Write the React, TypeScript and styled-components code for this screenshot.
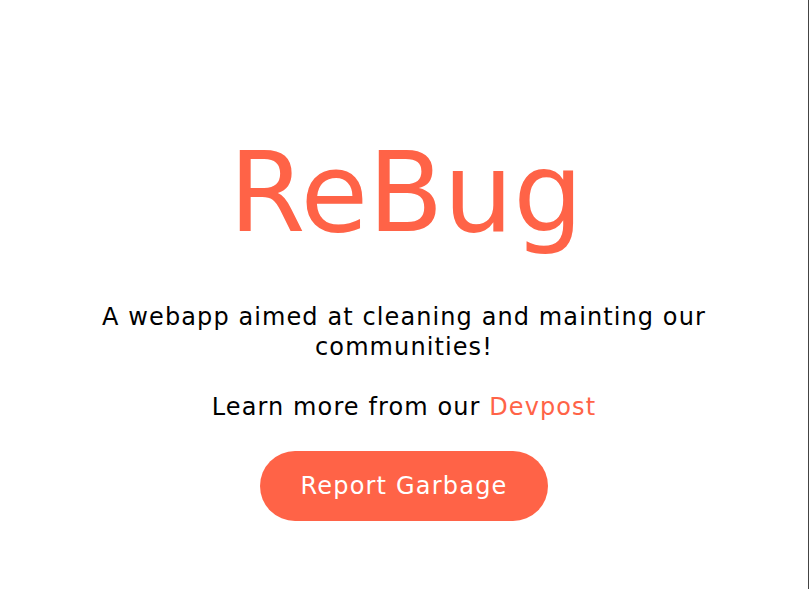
import React from "react";
import styled, { createGlobalStyle } from "styled-components";

const GlobalStyle = createGlobalStyle`
  html, body {
    margin: 0;
    padding: 0;
    background: #ffffff;
  }
  body {
    font-family: "DejaVu Sans", "Liberation Sans", sans-serif;
  }
`;

const Page = styled.main`
  box-sizing: border-box;
  width: 809px;
  height: 589px;
  border-right: 1px solid #444444;
  display: flex;
  flex-direction: column;
  align-items: center;
  padding-top: 138px;
  color: #000000;
`;

const Title = styled.h1`
  margin: 0;
  padding-left: 4px;
  font-size: 110px;
  line-height: 110px;
  font-weight: 400;
  letter-spacing: 0;
  color: #ff6347;
`;

const Tagline = styled.p`
  margin: 54px 0 0;
  max-width: 660px;
  text-align: center;
  font-size: 24px;
  line-height: 30px;
  letter-spacing: 1.1px;
`;

const LearnMore = styled.p`
  margin: 30px 0 0;
  font-size: 24px;
  line-height: 30px;
  letter-spacing: 1.1px;
  text-align: center;
`;

const Link = styled.a`
  color: #ff6347;
  text-decoration: none;
`;

const Button = styled.button`
  margin-top: 29px;
  width: 288px;
  height: 70px;
  border: none;
  border-radius: 35px;
  background: #ff6347;
  color: #ffffff;
  font-family: inherit;
  font-size: 24px;
  letter-spacing: 1.2px;
  cursor: pointer;
`;

export default function App() {
  return (
    <>
      <GlobalStyle />
      <Page>
        <Title>ReBug</Title>
        <Tagline>A webapp aimed at cleaning and mainting our communities!</Tagline>
        <LearnMore>
          Learn more from our <Link href="#">Devpost</Link>
        </LearnMore>
        <Button>Report Garbage</Button>
      </Page>
    </>
  );
}
